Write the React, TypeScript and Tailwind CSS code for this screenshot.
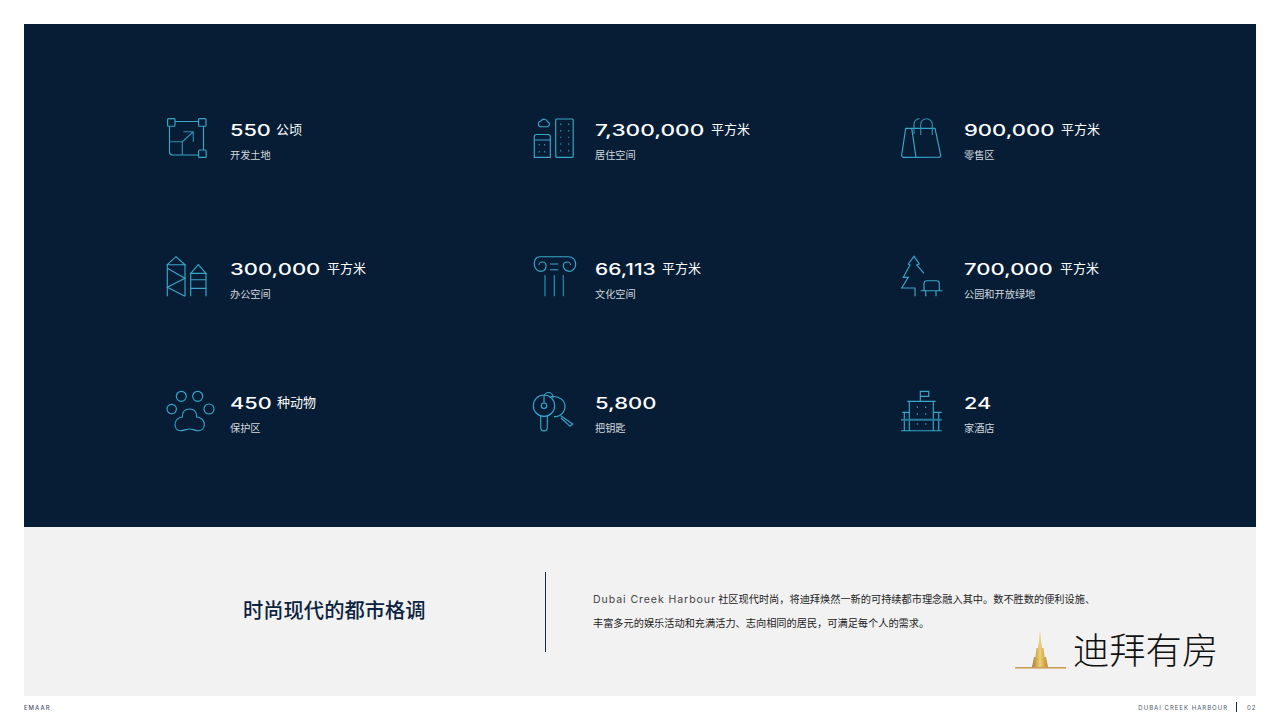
const cjk = "font-['Noto_Sans_CJK_SC','Noto_Sans',sans-serif]";

function Icon({ children }: { children: React.ReactNode }) {
  return (
    <svg
      viewBox="0 0 50 46"
      fill="none"
      stroke="#3aa6ca"
      strokeWidth="1.15"
      className="w-[50px] h-[46px] shrink-0"
    >
      {children}
    </svg>
  );
}

const LandIcon = () => (
  <Icon>
    <rect x="2.6" y="3.6" width="7.4" height="7.6" rx="1" />
    <rect x="33.6" y="3.6" width="7.4" height="7.6" rx="1" />
    <rect x="33.6" y="35" width="7.6" height="7.4" rx="1" />
    <path d="M10 6.5H33.6M38.5 11.2V35M4.5 11.2V37a3 3 0 0 0 3 3H33.6" />
    <path d="M4.5 26.7H17.3V40M17.3 26.7L28.3 16.7M18.3 16.7H28.3V26.7" stroke="#2f8eb0" />
  </Icon>
);

const ResidentialIcon = () => (
  <Icon>
    <rect x="24.7" y="4" width="17.5" height="38.3" rx="1" />
    <path
      d="M29.7 8.5v1.4M37.7 8.5v1.4M29.7 15v1.4M37.7 15v1.4M29.7 21.7v1.4M37.7 21.7v1.4M29.7 28.3v1.4M37.7 28.3v1.4M29.7 35v1.4M37.7 35v1.4"
      stroke="#2f8eb0"
    />
    <path d="M5.5 19.5h11.5a2.3 2.3 0 0 1 2.3 2.3V42.3H3.3V21.8a2.3 2.3 0 0 1 2.2-2.3ZM3.3 25H19.3" />
    <path d="M8.3 29v1.4M13.6 29v1.4M8.3 36v1.4M13.6 36v1.4" stroke="#2f8eb0" />
    <path d="M9 11.7H16a2.5 2.5 0 0 0 .6-4.9A3.6 3.6 0 0 0 10 6a3 3 0 0 0-1 5.7Z" />
  </Icon>
);

const RetailIcon = () => (
  <Icon>
    <path d="M6.7 13.3H36L41.7 40a2 2 0 0 1-2 2.3H4.7a2 2 0 0 1-2-2.3L6.7 13.3ZM12.7 13.3L17 42.3" />
    <path d="M15 19V9.5c0-3.5 2.5-5.5 5.5-6" stroke="#2f8eb0" />
    <path d="M21.7 20V9.5a5.8 5.8 0 0 1 11.6 0V20" stroke="#2f8eb0" />
  </Icon>
);

const OfficeIcon = () => (
  <Icon>
    <path d="M2.3 10.7L11 2.7L20 10.7H2.3ZM2.3 10.7V42.3M20 10.7V42.3" />
    <path d="M2.3 14.3L20 24.3L2.3 33.3L20 42.3" />
    <path d="M25.7 19.3L33.3 10.7L41 19.3H25.7ZM25.7 19.3V42.3M41 19.3V42.3M25.7 25.7H41M25.7 34.3H41" />
  </Icon>
);

const ColumnIcon = () => (
  <Icon>
    <path d="M9 2.7H37.3C42 2.7 44.7 6 44.7 10C44.7 14 42 17.3 38.5 17.3C35 17.3 32.3 15 32.3 12C32.3 9.5 34 8 36 8C38 8 39.5 9.5 39.5 11" />
    <path d="M9 2.7C4.5 2.7 3.3 6 3.3 10C3.3 14 6 17.3 9.5 17.3C13 17.3 15 15 15 12C15 9.5 13.5 8 11.5 8C9.5 8 8 9.5 8 11" />
    <path d="M19 10H27.3M19 15.7H27.3" />
    <path d="M14 21V42.3M23.3 21V42.3M32.3 21V42.3" stroke="#2f8eb0" />
  </Icon>
);

const ParkIcon = () => (
  <Icon>
    <path d="M16 42.3V34H2.7L9.3 23.3H4.3L11 11L9.3 10L15 2.3L20.3 10L17.7 11L25 19.3" />
    <path d="M21.7 36.7H43.7M25 36.7V29.5a2.8 2.8 0 0 1 2.8-2.8H37.5a2.8 2.8 0 0 1 2.8 2.8V36.7M26.7 36.7V42.3M37 36.7V42.3" />
  </Icon>
);

const PawIcon = () => (
  <Icon>
    <circle cx="16.3" cy="8.3" r="5" />
    <circle cx="32.7" cy="8.3" r="5" />
    <circle cx="6.7" cy="21" r="4.7" />
    <circle cx="44" cy="21" r="5" />
    <path d="M17.3 29C17.3 24 20 21 24.6 21C29 21 31.7 24 31.7 29C36 29.5 39.3 32.5 39.3 36.5C39.3 40.5 36.5 42.7 33.5 42.7C30 42.7 28 41 24.6 41C21 41 19 42.7 15.5 42.7C12.5 42.7 10 40.5 10 36.5C10 32.5 13 29.5 17.3 29Z" />
  </Icon>
);

const KeysIcon = () => (
  <Icon>
    <circle cx="13" cy="17.7" r="10.7" />
    <circle cx="13" cy="17.7" r="2.7" />
    <path d="M13 15V9a4.5 4.5 0 0 1 9 0V10" />
    <path d="M9.7 28V39.5a3.3 3.3 0 0 0 6.6 0V28" />
    <path d="M20 8.6C28 8 34 12 34 18.3C34 22.5 32 25.5 28.7 27.5C27 28.3 25 28.8 23 28.6" />
    <path d="M29.7 27.7L41.7 36L39 38.3L30 30" />
  </Icon>
);

const HotelIcon = () => (
  <Icon>
    <path d="M21.3 13.3V3.3H29.7V8.3H21.3" />
    <path d="M8.3 13.3H36.7M10.3 13.3V42.7M34.3 13.3V42.7" />
    <path d="M3.3 24.3H10.3M5.3 24.3V42.7M34.3 24.3H42.7M39.7 24.3V42.7M2 42.7H42.7" />
    <path d="M2 31.7H42.7" stroke="#2a7c9a" strokeWidth="2" />
    <path d="M18.3 18.5v1.6M26.7 18.5v1.6M18.3 25.2v1.6M26.7 25.2v1.6M18.3 35.2v1.6M26.7 35.2v1.6" />
  </Icon>
);

const rows = [
  {
    height: "h-[139px]",
    items: [
      { icon: <LandIcon />, num: "550", numWidth: "w-[41px]", scale: "scale-x-[1.4]", unit: "公顷", label: "开发土地", gap: "gap-[15px]" },
      { icon: <ResidentialIcon />, num: "7,300,000", numWidth: "w-[111px]", scale: "scale-x-[1.46]", unit: "平方米", label: "居住空间", gap: "gap-[14px]" },
      { icon: <RetailIcon />, num: "900,000", numWidth: "w-[92px]", scale: "scale-x-[1.42]", unit: "平方米", label: "零售区", gap: "gap-[15px]" },
    ],
  },
  {
    height: "h-[134px]",
    items: [
      { icon: <OfficeIcon />, num: "300,000", numWidth: "w-[92px]", scale: "scale-x-[1.42]", unit: "平方米", label: "办公空间", gap: "gap-[15px]" },
      { icon: <ColumnIcon />, num: "66,113", numWidth: "w-[62px]", scale: "scale-x-[1.35]", unit: "平方米", label: "文化空间", gap: "gap-[14px]" },
      { icon: <ParkIcon />, num: "700,000", numWidth: "w-[91px]", scale: "scale-x-[1.42]", unit: "平方米", label: "公园和开放绿地", gap: "gap-[15px]" },
    ],
  },
  {
    height: "h-[60px]",
    items: [
      { icon: <PawIcon />, num: "450", numWidth: "w-[42px]", scale: "scale-x-[1.4]", unit: "种动物", label: "保护区", gap: "gap-[15px]" },
      { icon: <KeysIcon />, num: "5,800", numWidth: "w-[62px]", scale: "scale-x-[1.42]", unit: "", label: "把钥匙", gap: "gap-[14px]" },
      { icon: <HotelIcon />, num: "24", numWidth: "w-[26px]", scale: "scale-x-[1.4]", unit: "", label: "家酒店", gap: "gap-[15px]" },
    ],
  },
];

function Stat({ item }: { item: (typeof rows)[number]["items"][number] }) {
  return (
    <div className={`flex ${item.gap}`}>
      {item.icon}
      <div className="pt-[5px]">
        <div className="flex items-center gap-[5px] h-[20px] text-white">
          <span className={`${item.numWidth} inline-block`}>
            <span className={`inline-block origin-left ${item.scale} font-['Inter',sans-serif] font-medium text-[15.5px] leading-5 whitespace-nowrap`}>
              {item.num}
            </span>
          </span>
          {item.unit && <span className={`${cjk} text-[13px] leading-[18px] pb-[2px]`}>{item.unit}</span>}
        </div>
        <p className={`${cjk} mt-[7px] text-[10.2px] leading-[15px] text-[#d3d8de]`}>{item.label}</p>
      </div>
    </div>
  );
}

export default function App() {
  return (
    <div className="w-[1280px] h-[720px] bg-white overflow-hidden flex flex-col pt-6">
      <section className="mx-6 h-[503px] bg-[#061d35] pt-[91px] pl-[141px]">
        {rows.map((row, i) => (
          <div key={i} className={`grid grid-cols-[366px_368px_1fr] ${row.height}`}>
            {row.items.map((item) => (
              <Stat key={item.label} item={item} />
            ))}
          </div>
        ))}
      </section>

      <section className="relative mx-6 h-[169px] bg-[#f2f2f2] flex items-center">
        <h2 className={`${cjk} w-[521px] pl-[219px] -mt-[5px] text-[20.3px] font-medium text-[#0b2340] whitespace-nowrap`}>
          时尚现代的都市格调
        </h2>
        <div className="w-px h-[80px] bg-[#1b2a3c]" />
        <div className={`${cjk} ml-[47px] -mt-[2px] text-[10.2px] leading-[23.5px] text-[#222] whitespace-nowrap`}>
          <p>
            <span className="font-['Inter',sans-serif] text-[10.5px] tracking-[0.95px] text-[#444]">Dubai Creek Harbour</span>
            {" "}社区现代时尚，将迪拜焕然一新的可持续都市理念融入其中。数不胜数的便利设施、
          </p>
          <p>丰富多元的娱乐活动和充满活力、志向相同的居民，可满足每个人的需求。</p>
        </div>

        <div className="absolute left-[991px] top-[103px] flex items-end gap-[7px]">
          <svg viewBox="0 0 51 40" className="w-[51px] h-[40px]">
            <defs>
              <linearGradient id="gold" x1="0" x2="1" y1="0" y2="0">
                <stop offset="0" stopColor="#a97c34" />
                <stop offset="0.5" stopColor="#f0cf72" />
                <stop offset="1" stopColor="#b58838" />
              </linearGradient>
            </defs>
            <path d="M25 0L25.8 10L27 18L28.5 18L29.5 27L31 27L33 37H17L19 27L20.5 27L21.5 18L23 18L24.2 10Z" fill="url(#gold)" />
            <rect x="0" y="37" width="51" height="1.6" fill="#c9a054" />
          </svg>
          <span className={`${cjk} font-light text-[36.3px] leading-[40px] -translate-y-[2px] text-[#111] whitespace-nowrap`}>
            迪拜有房
          </span>
        </div>
      </section>

      <footer className="flex-1 mx-6 pb-[2px] flex items-center justify-between font-['Inter',sans-serif] text-[6px] text-[#4a566a]">
        <span className="tracking-[1px] font-medium">EMAAR</span>
        <div className="flex items-center">
          <span className="tracking-[1px]">DUBAI CREEK HARBOUR</span>
          <span className="w-px h-[10px] bg-[#1b2a3c] ml-2 mr-[10px]" />
          <span className="tracking-[0.85px] w-[9px]">02</span>
        </div>
      </footer>
    </div>
  );
}
